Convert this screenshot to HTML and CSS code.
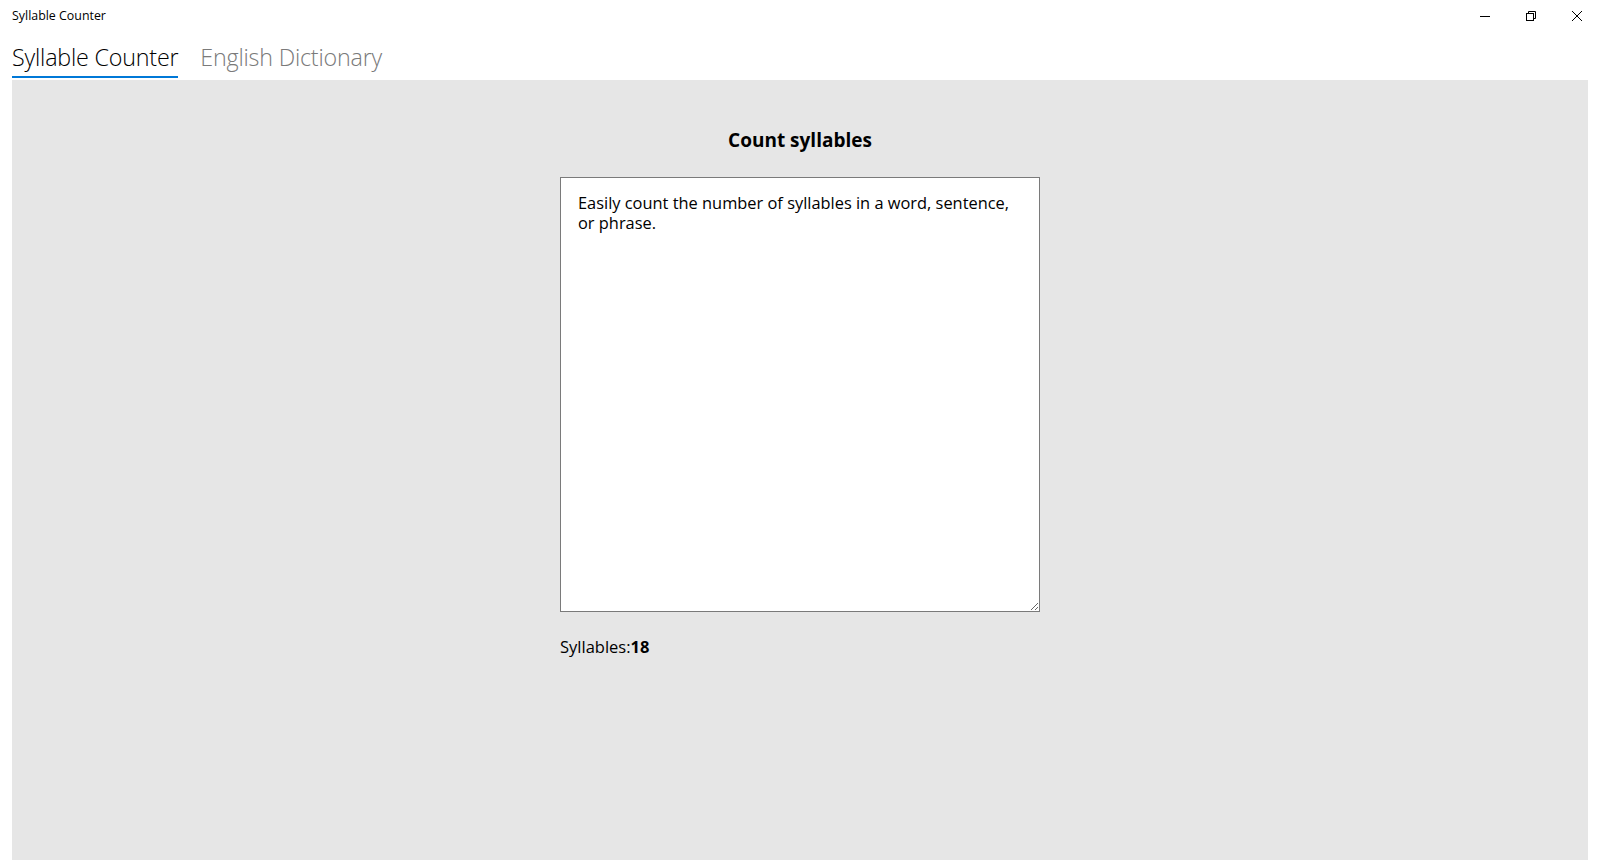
FILE: index.html
```html
<!DOCTYPE html>
<html lang="en">
<head>
  <meta charset="UTF-8">
  <title>Syllable Counter</title>
  <link rel="stylesheet" href="styles.css">
</head>
<body>
  <!-- Window title bar -->
  <div class="titlebar">
    <span class="app-title">Syllable Counter</span>
    <div class="window-buttons">
      <span class="win-btn">
        <svg width="12" height="12" viewBox="0 0 12 12"><path d="M1 6.5h10" stroke="#000" stroke-width="1"/></svg>
      </span>
      <span class="win-btn">
        <svg width="12" height="12" viewBox="0 0 12 12" fill="none" stroke="#000" stroke-width="1"><rect x="1.5" y="3.5" width="7" height="7"/><path d="M3.5 3.5v-2h7v7h-2"/></svg>
      </span>
      <span class="win-btn">
        <svg width="12" height="12" viewBox="0 0 12 12" fill="none" stroke="#000" stroke-width="1"><path d="M1 1l10 10M11 1L1 11"/></svg>
      </span>
    </div>
  </div>

  <!-- Pivot tabs -->
  <div class="tabs">
    <span class="tab active">Syllable Counter</span>
    <span class="tab">English Dictionary</span>
  </div>

  <div class="content">
    <h1 class="heading">Count syllables</h1>
    <div class="counter">
      <textarea class="input">Easily count the number of syllables in a word, sentence, or phrase.</textarea>
      <p class="result">Syllables:<b>18</b></p>
    </div>
  </div>
</body>
</html>
```

FILE: styles.css
```css
html, body {
  height: 100%;
}

body {
  margin: 0;
  background-color: #fff;
  font-family: "Open Sans", "Noto Sans", sans-serif;
  color: #000;
  display: flex;
  flex-direction: column;
  overflow: hidden;
}

.titlebar {
  height: 32px;
  display: flex;
  align-items: center;
  justify-content: space-between;
  padding-left: 12px;
}

.app-title {
  font-size: 12.4px;
  margin-top: -2px;
}

.window-buttons {
  display: flex;
  height: 100%;
  margin-top: -1px;
}

.win-btn {
  width: 46px;
  display: flex;
  align-items: center;
  justify-content: center;
}

.tabs {
  height: 48px;
  display: flex;
  padding-left: 12px;
  gap: 22px;
}

.tab {
  font-size: 23.3px;
  font-weight: 300;
  color: #7a7a7a;
  padding-top: 9px;
  border-bottom: 2px solid transparent;
  height: 35px;
  letter-spacing: -0.2px;
}

.tab.active {
  color: #000;
  border-bottom-color: #0078d7;
}

.content {
  flex: 1;
  margin: 0 12px;
  background-color: #e6e6e6;
  display: flex;
  flex-direction: column;
  align-items: center;
}

.heading {
  font-size: 19px;
  font-weight: 700;
  margin: 46px 0 0;
  line-height: 28px;
}

.counter {
  margin-top: 23px;
  width: 480px;
}

.input {
  display: block;
  box-sizing: border-box;
  width: 480px;
  height: 435px;
  border: 1px solid #7a7a7a;
  background: #fff;
  padding: 15px 22px 17px 17px;
  font-family: "Open Sans", "Noto Sans", sans-serif;
  font-size: 16.4px;
  line-height: 20px;
  color: #000;
  resize: both;
  outline: none;
  margin: 0;
}

.result {
  margin: 23px 0 0;
  font-size: 16.5px;
  line-height: 24px;
}

.result b {
  font-weight: 700;
}
```
